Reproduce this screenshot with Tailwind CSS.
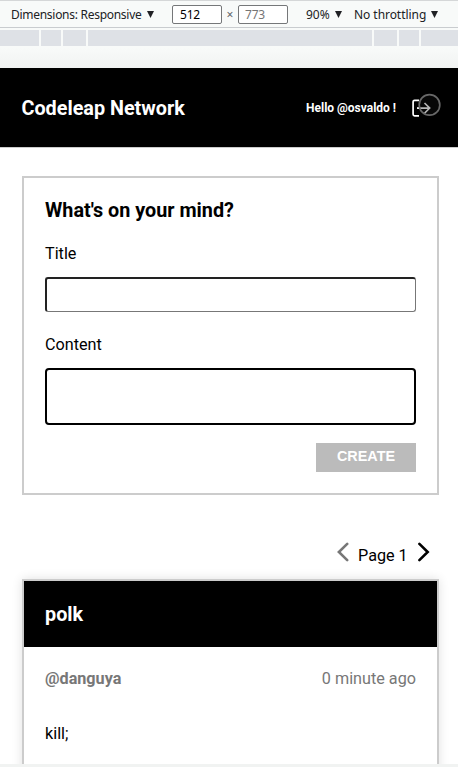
<!DOCTYPE html>
<html lang="en">
<head>
<meta charset="utf-8">
<title>Codeleap Network</title>
<script src="https://cdn.jsdelivr.net/npm/@tailwindcss/browser@4"></script>
</head>
<body class="w-[458px] h-[767px] overflow-hidden bg-white font-[Roboto,sans-serif] text-black flex flex-col">
  <div class="h-7 shrink-0 bg-[#f8faf9] border-t border-b border-t-[#d5d7d8] border-b-[#c9cccf] flex items-center font-['Noto_Sans','Open_Sans',sans-serif] text-[12px] text-[#202124] whitespace-nowrap pl-[11px]">
    <div class="w-[161px] flex items-center">
      <span class="w-[136px] tracking-[-0.28px] pt-px">Dimensions: Responsive</span>
      <svg class="w-[7px] h-[7px]" viewBox="0 0 7 7"><path d="M0 0H7L3.5 7Z" fill="#202124"/></svg>
    </div>
    <div class="w-[50px] h-[19px] border border-[#757779] rounded-[2px] bg-white pl-[7px] leading-[18px] text-black tracking-[-0.2px]">512</div>
    <span class="w-4 text-center text-[#5f6368] pt-px">×</span>
    <div class="w-[50px] h-[19px] border border-[#757779] rounded-[2px] bg-white pl-[6px] leading-[18px] text-[#757575] tracking-[-0.2px]">773</div>
    <span class="w-[29px] ml-[18px] pt-px">90%</span>
    <svg class="w-[7px] h-[7px]" viewBox="0 0 7 7"><path d="M0 0H7L3.5 7Z" fill="#202124"/></svg>
    <span class="w-[77px] ml-[12px] pt-px tracking-[-0.05px]">No throttling</span>
    <svg class="w-[7px] h-[7px]" viewBox="0 0 7 7"><path d="M0 0H7L3.5 7Z" fill="#202124"/></svg>
  </div>
  <div class="h-10 shrink-0 pt-[2px] bg-linear-to-b from-[#f8faf9] from-50% to-[#f1f3f2]">
    <div class="h-4 flex gap-[2px] bg-[#f8faf9]">
      <div class="w-[39px] bg-[#dee1e6]"></div>
      <div class="w-5 bg-[#dee1e6]"></div>
      <div class="w-[23px] bg-[#dee1e6]"></div>
      <div class="w-[284px] bg-[#dee1e6]"></div>
      <div class="w-[23px] bg-[#dee1e6]"></div>
      <div class="w-5 bg-[#dee1e6]"></div>
      <div class="grow bg-[#dee1e6]"></div>
    </div>
  </div>
  <header class="h-20 shrink-0 bg-black border-b border-[#ccc] text-white flex items-center justify-between pl-[21.5px] pr-[17px]">
    <h1 class="text-[19.8px] font-bold leading-6 pt-[2px]">Codeleap Network</h1>
    <div class="flex items-center">
      <span class="text-[12px] font-bold w-[91px] whitespace-nowrap">Hello @osvaldo !</span>
      <svg class="ml-[14px] w-[30px] h-[26px] overflow-visible" viewBox="0 0 30 26" fill="none">
        <path d="M8 5.3H3.6Q2.1 5.3 2.1 6.8V19.3Q2.1 20.8 3.6 20.8H8" stroke="#fff" stroke-width="1.7"/>
        <path d="M6.5 13.1H18.5M13.5 8L18.7 13.1L13.5 18.2" stroke="#bbb" stroke-width="1.6"/>
        <path d="M6 13.1H9" stroke="#fff" stroke-width="1.6"/>
        <circle cx="18.5" cy="9.9" r="10.3" fill="#777" fill-opacity=".06" stroke="#686868" stroke-width="1.7"/>
      </svg>
    </div>
  </header>
  <main class="h-[616px] shrink-0 px-[22px] pt-[28px] overflow-hidden">
    <form class="h-[319px] w-[417px] border-2 border-[#ccc] px-[21px] flex flex-col">
      <h2 class="mt-[21px] text-[19.8px] font-bold leading-6">What's on your mind?</h2>
      <label class="mt-[21px] h-5 text-[16.2px] leading-5">Title</label>
      <input class="mt-[13px] h-[35px] shrink-0 w-[371px] border-[1.5px] border-t-2 border-l-2 border-t-[#222] border-l-[#222] border-[#777] rounded-[3px]">
      <label class="mt-[23px] h-5 text-[16.2px] leading-5">Content</label>
      <textarea class="mt-[13px] h-[57px] shrink-0 w-[371px] border-2 border-black rounded-[4px] resize-none"></textarea>
      <button type="button" class="mt-[18px] h-[29px] w-[100px] self-end bg-[#bbb] text-white font-['Liberation_Sans',sans-serif] font-bold text-[14.4px] leading-4 pb-[3px]">CREATE</button>
    </form>
    <nav class="h-[84px] flex items-end justify-end pb-[13px] pr-[6px] text-[16.2px] leading-5">
      <svg class="w-3 h-5 mb-[4px]" viewBox="0 0 12 20" fill="none" stroke="#777" stroke-width="2.6" stroke-linecap="round"><path d="M10.2 1.9L1.9 10L10.2 18.1"/></svg>
      <span class="w-[50px] ml-[9px]">Page 1</span>
      <svg class="w-3 h-5 mb-[4px] ml-[10px]" viewBox="0 0 12 20" fill="none" stroke="#000" stroke-width="2.6" stroke-linecap="round"><path d="M1.4 1.9L9.7 10L1.4 18.1"/></svg>
    </nav>
    <article class="h-[260px] w-[417px] border-2 border-[#ccc] shadow-[0_0_10px_rgba(0,0,0,.12)]">
      <h2 class="h-[66px] bg-black text-white px-[21px] text-[19.8px] font-bold leading-[68px]">polk</h2>
      <div class="px-[21px] pt-[22px] flex justify-between text-[16.2px] leading-5 text-[#777]">
        <b>@danguya</b><span>0 minute ago</span>
      </div>
      <p class="px-[21px] pt-[35px] text-[16.2px] leading-5">kill;</p>
    </article>
  </main>
  <div class="h-[3px] shrink-0 bg-[#f1f3f2]"></div>
</body>
</html>
